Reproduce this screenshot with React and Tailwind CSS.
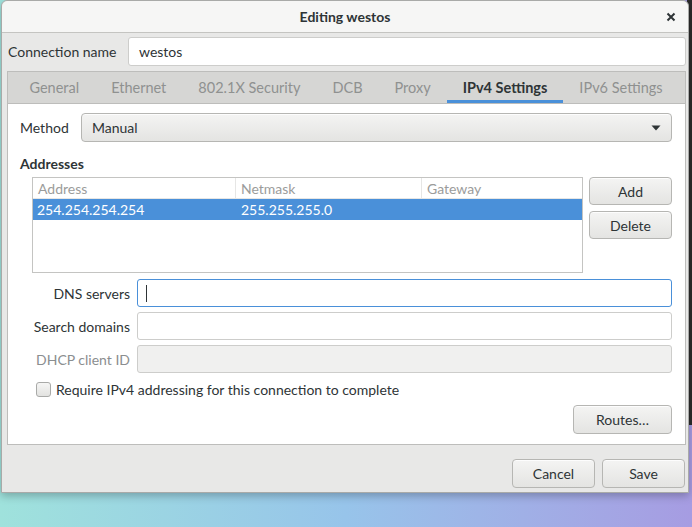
import { useState } from 'react'

const font = { fontFamily: 'Lato, "Noto Sans", sans-serif' }

function Button({ children, className = '' }) {
  return (
    <button
      className={
        'flex items-center justify-center rounded-[4px] border border-[#b6b6b3] bg-gradient-to-b from-[#f4f4f3] to-[#e4e4e2] text-[14px] text-[#2e3436] shadow-[0_1px_0_rgba(255,255,255,0.8)_inset] ' +
        className
      }
    >
      {children}
    </button>
  )
}

function Field({ label, disabled, focused }) {
  return (
    <div className="flex items-center gap-[7px] pl-[12px]">
      <span
        className={
          'w-[98px] text-right text-[14px] ' + (disabled ? 'text-[#8b8e8f]' : 'text-[#2e3436]')
        }
      >
        {label}
      </span>
      <div
        className={
          'flex h-[28px] flex-1 items-center rounded-[3px] border px-[8px] ' +
          (focused
            ? 'border-[#4a90d9] bg-white'
            : disabled
              ? 'border-[#cdcdcb] bg-[#f0f0ef]'
              : 'border-[#cdcdcb] bg-white')
        }
      >
        {focused && <span className="h-[17px] w-px bg-[#2e3436]" />}
      </div>
    </div>
  )
}

const tabs = ['General', 'Ethernet', '802.1X Security', 'DCB', 'Proxy', 'IPv4 Settings', 'IPv6 Settings']

export default function App() {
  const [active] = useState('IPv4 Settings')

  return (
    <div
      className="relative h-[527px] w-[692px] overflow-hidden bg-gradient-to-r from-[#9fe2dc] via-[#97c4ea] to-[#a69ce2]"
      style={font}
    >
      {/* terminal window behind, peeking out on the right */}
      <div className="absolute right-0 top-0 h-[425px] w-[5px] bg-[#2b2b2b]" />

      <div className="relative ml-[1px] flex h-[493px] w-[688px] flex-col rounded-t-[6px] border border-[#a9aaa8] bg-[#e8e8e7] shadow-[0_3px_8px_rgba(0,0,0,0.25)]">
        {/* Title bar */}
        <div className="flex h-[32px] items-center rounded-t-[6px] border-b border-[#c4c4c1] bg-[#f6f6f5]">
          <div className="w-[40px]" />
          <div className="flex-1 text-center text-[14px] font-bold text-[#2e3436]">Editing westos</div>
          <div className="flex w-[40px] items-center justify-center pl-[6px]">
            <svg width="10" height="10" viewBox="0 0 10 10">
              <path d="M1.5 1.5 L8.5 8.5 M8.5 1.5 L1.5 8.5" stroke="#2e3436" strokeWidth="2" />
            </svg>
          </div>
        </div>

        {/* Connection name */}
        <div className="mt-[4px] flex items-center pr-[2px]">
          <span className="w-[126px] pl-[6px] text-[14px] text-[#2e3436]">Connection name</span>
          <div className="flex h-[29px] flex-1 items-center rounded-[3px] border border-[#cdcdcb] bg-white px-[10px] text-[14px] text-[#2e3436]">
            westos
          </div>
        </div>

        {/* Notebook */}
        <div className="ml-[5px] mr-[2px] mt-[5px] flex h-[374px] flex-col border border-[#bdbdbb]">
          <div className="flex h-[32px] items-stretch justify-center border-b border-[#bdbdbb] bg-[#d6d6d4] pl-[3px] pr-[4px]">
            {tabs.map(t => (
              <div
                key={t}
                className={
                  'flex items-center px-[16px] text-[14.5px] ' +
                  (t === active
                    ? 'border-b-[3px] border-[#4a90d9] pt-[3px] font-bold text-[#2e3436]'
                    : 'text-[#8f9190]')
                }
              >
                {t}
              </div>
            ))}
          </div>

          <div className="flex flex-1 flex-col bg-white pl-[12px] pr-[13px]">
            {/* Method */}
            <div className="mt-[9px] flex items-center">
              <span className="w-[61px] text-[14px] text-[#2e3436]">Method</span>
              <Button className="h-[29px] flex-1 !justify-between px-[10px]">
                <span>Manual</span>
                <svg width="10" height="6" viewBox="0 0 10 6">
                  <path d="M0.5 0.5 L9.5 0.5 L5 5.5 Z" fill="#2e3436" />
                </svg>
              </Button>
            </div>

            <div className="mt-[11px] text-[14px] font-bold text-[#2e3436]">Addresses</div>

            {/* Address table + buttons */}
            <div className="mt-[3px] flex gap-[6px] pl-[12px]">
              <div className="h-[96px] flex-1 border border-[#c4c4c2] bg-white">
                <div className="flex h-[21px] border-b border-[#e6e6e5] text-[14px] text-[#9b9c9b]">
                  <div className="w-[203px] border-r border-[#e6e6e5] pl-[5px]">Address</div>
                  <div className="w-[186px] border-r border-[#e6e6e5] pl-[5px]">Netmask</div>
                  <div className="flex-1 pl-[5px]">Gateway</div>
                </div>
                <div className="flex h-[21px] items-center bg-[#4a90d9] text-[14px] text-white">
                  <div className="w-[203px] pl-[4px]">254.254.254.254</div>
                  <div className="w-[186px] pl-[5px]">255.255.255.0</div>
                  <div className="flex-1" />
                </div>
              </div>
              <div className="flex w-[83px] flex-col gap-[6px]">
                <Button className="h-[28px]">Add</Button>
                <Button className="h-[28px]">Delete</Button>
              </div>
            </div>

            {/* DNS / search / DHCP */}
            <div className="mt-[6px] flex flex-col gap-[5px]">
              <Field label="DNS servers" focused />
              <Field label="Search domains" />
              <Field label="DHCP client ID" disabled />
            </div>

            <div className="mt-[6px] flex items-center gap-[5px] pl-[16px]">
              <div className="h-[15px] w-[15px] rounded-[3px] border border-[#a9aaa8] bg-gradient-to-b from-[#f6f6f5] to-[#e2e2e0]" />
              <span className="text-[14px] text-[#2e3436]">Require IPv4 addressing for this connection to complete</span>
            </div>

            <div className="mt-[5px] flex justify-end">
              <Button className="h-[29px] w-[99px]">Routes…</Button>
            </div>
          </div>
        </div>

        {/* Dialog actions */}
        <div className="mt-[14px] flex justify-end gap-[7px] pr-[3px]">
          <Button className="h-[29px] w-[83px]">Cancel</Button>
          <Button className="h-[29px] w-[83px]">Save</Button>
        </div>
      </div>
    </div>
  )
}
